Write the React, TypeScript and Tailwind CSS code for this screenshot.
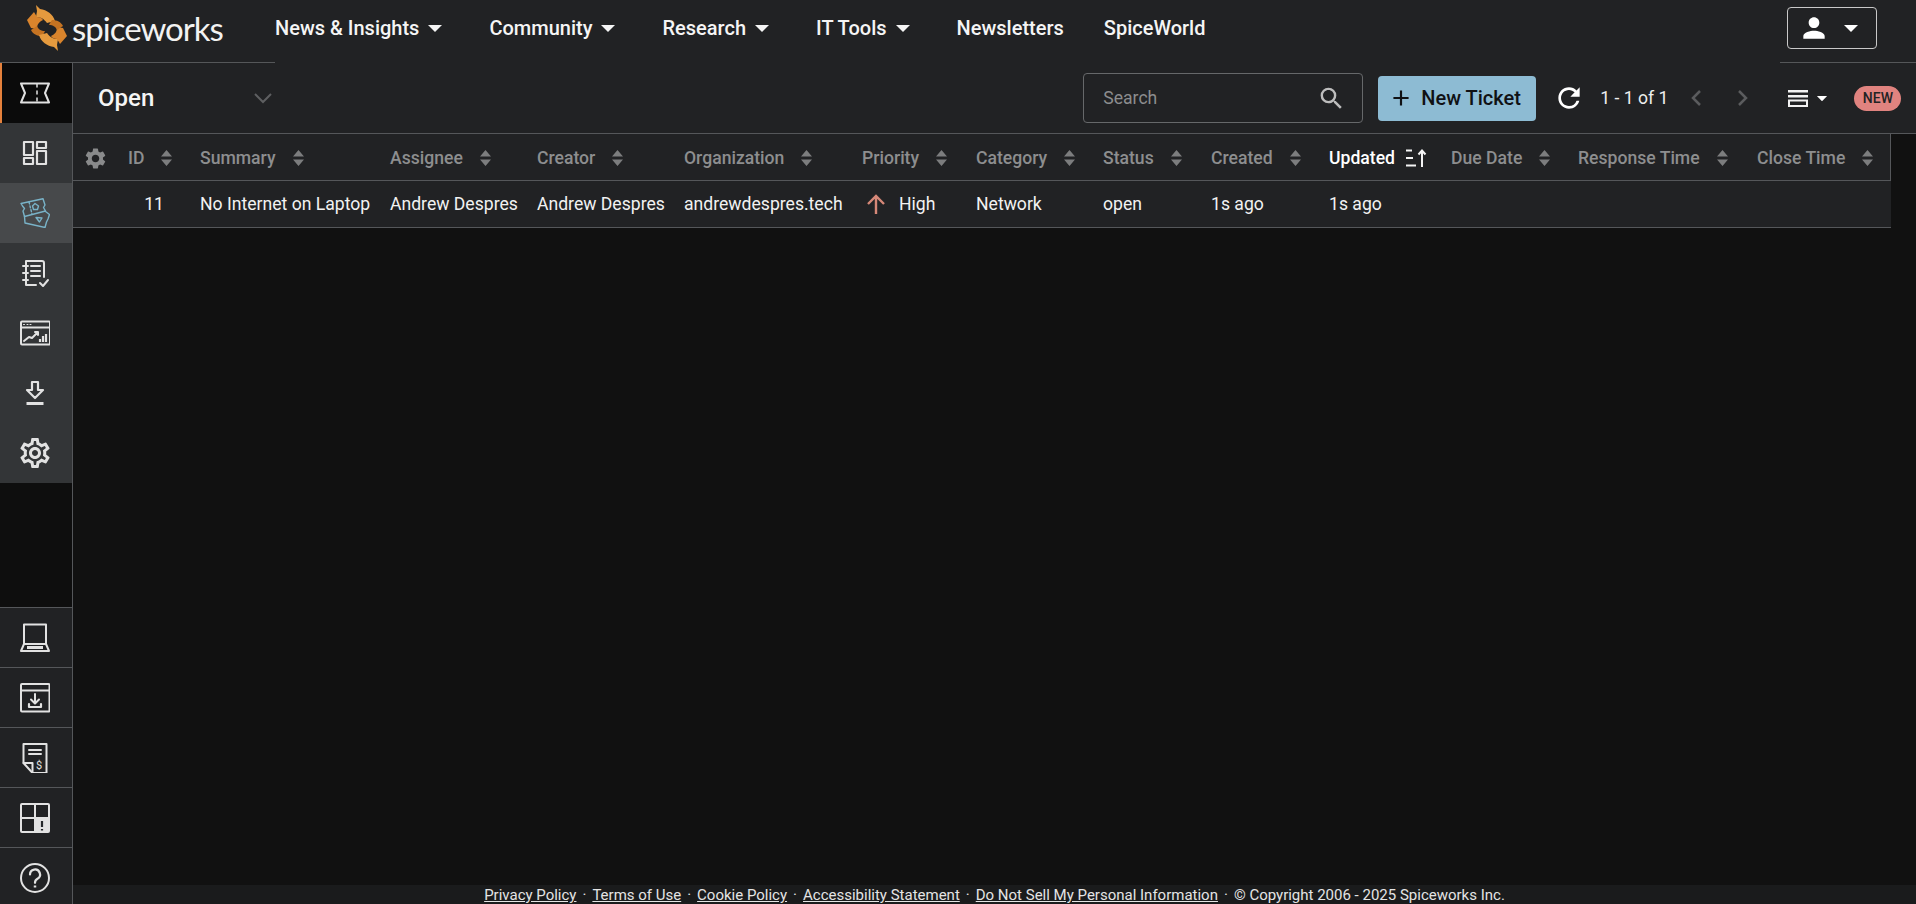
import React from 'react';
import { MdAdd, MdOutlineSettings, MdPerson, MdRefresh, MdSearch, MdSettings } from 'react-icons/md';

const headers = [
  { label: 'ID' },
  { label: 'Summary' },
  { label: 'Assignee' },
  { label: 'Creator' },
  { label: 'Organization' },
  { label: 'Priority' },
  { label: 'Category' },
  { label: 'Status' },
  { label: 'Created' },
  { label: 'Updated', active: true },
  { label: 'Due Date' },
  { label: 'Response Time' },
  { label: 'Close Time' },
];

const footerLinks = ['Privacy Policy', 'Terms of Use', 'Cookie Policy', 'Accessibility Statement', 'Do Not Sell My Personal Information'];

function Caret({ className = '' }: { className?: string }) {
  return (
    <svg width="14" height="7" viewBox="0 0 14 7" className={className}>
      <path d="M0 0h14L7 7z" fill="currentColor" />
    </svg>
  );
}

function SortArrows() {
  return (
    <svg width="11" height="16" viewBox="0 0 11 16" className="ml-[17px] shrink-0 text-[#7c7d7e]">
      <path d="M5.5 0 11 6.5H0zM0 9.5h11L5.5 16z" fill="currentColor" />
    </svg>
  );
}

function Fan() {
  return (
    <g>
      <path d="M9 0l4 4C20 5 26 9 28 16l-8 2c-3-4-6-6-11-6l1-6z" fill="#e59a3e" />
      <path d="M0 15l7-8 3 5c3 0 5 1 6 3-4 2-6 4-6 9l-6-1z" fill="#d9842c" />
      <path d="M4 25l6-4c1 3 4 5 8 5-1 2-2 4-3 5-5 0-9-2-11-6z" fill="#c57322" />
    </g>
  );
}

function SpiceLogo() {
  return (
    <svg width="40" height="46" viewBox="0 0 40 46" className="shrink-0">
      <Fan />
      <g transform="rotate(180 20 23)">
        <Fan />
      </g>
    </svg>
  );
}

const line = { fill: 'none', stroke: '#e2e2e2', strokeWidth: 2, strokeLinejoin: 'round' as const, strokeLinecap: 'round' as const };

function TicketIcon() {
  return (
    <svg width="30" height="30" viewBox="0 0 30 30" {...line}>
      <path d="M1 5.500h28l-4 9.500 4 9.500H1l4-9.500z" />
      <path d="M17 6v3M17 13v3M17 20v3" strokeWidth="1.500" />
    </svg>
  );
}

function DashboardIcon() {
  return (
    <svg width="30" height="30" viewBox="0 0 30 30" {...line} strokeWidth={2.200}>
      <rect x="4" y="4" width="9" height="13" />
      <rect x="17" y="4" width="9" height="6" />
      <rect x="4" y="20" width="9" height="6" />
      <rect x="17" y="13" width="9" height="13" />
    </svg>
  );
}

function TicketsIcon() {
  return (
    <svg width="30" height="30" viewBox="0 0 30 30" {...line} stroke="#79b3c8" strokeWidth={1.400}>
      <path d="M1 5.500 23 .7l2 6.300-1.500 2.500 2 3.500L4.500 18.500 3 13l1.500-2.500L2.500 8z" />
      <path d="M9 4l3 12" strokeDasharray="2 2" />
      <path d="M15 5.500l3.500 2.500-1 3.500h-4l-1-3.500z" />
      <path d="M4.500 18.500 5 25l20 4.500 1.500-5.500 1.500-3 1.500-4.500-4-3" />
      <path d="M16 19.500l6 .5-2.500 4z" />
    </svg>
  );
}

function NotebookIcon() {
  return (
    <svg width="30" height="30" viewBox="0 0 30 30" {...line}>
      <path d="M6 3h16a2 2 0 0 1 2 2v14M6 3v24h10" />
      <path d="M3 8h5M3 15h5M3 22h5M11 8h9M11 13h9M11 18h9" />
      <path d="M20 25l3 3 5-6" />
    </svg>
  );
}

function ChartIcon() {
  return (
    <svg width="30" height="30" viewBox="0 0 30 30" {...line}>
      <rect x="1" y="3.500" width="29" height="23" rx="1" />
      <path d="M1 9.500h29" />
      <path d="M3.500 6.500h1M7 6.500h1M10 6.500h1" strokeWidth="1" />
      <path d="M4 23l5-4 3 1 6-6M15 14h3v3" />
      <path d="M20 24v-3M23 24v-6M26 24v-8" strokeWidth="2.200" strokeLinecap="butt" />
    </svg>
  );
}

function DownloadIcon() {
  return (
    <svg width="30" height="30" viewBox="0 0 30 30" {...line} strokeWidth={2.200}>
      <path d="M12 4h6v8h5l-8 8-8-8h5z" />
      <path d="M6.500 25.500h17" strokeWidth="3" strokeLinecap="butt" />
    </svg>
  );
}

function LaptopIcon() {
  return (
    <svg width="30" height="30" viewBox="0 0 30 30" {...line}>
      <path d="M4 21V1.500h22V21" />
      <path d="M4 21 1 28h28l-3-7z" />
      <path d="M7 24.500h16" strokeWidth="3" strokeLinecap="butt" />
    </svg>
  );
}

function InboxIcon() {
  return (
    <svg width="30" height="30" viewBox="0 0 30 30" {...line}>
      <rect x="1" y="1" width="28.500" height="27.500" rx="1" />
      <path d="M1 7.500h28.500" />
      <path d="M15 11v9M11 16.500l4 4 4-4" />
      <path d="M9 21v3h12v-3" strokeWidth="2.200" />
    </svg>
  );
}

function InvoiceIcon() {
  return (
    <svg width="30" height="30" viewBox="0 0 30 30" {...line}>
      <path d="M3.500 1h23v29h-14L3.500 20z" />
      <path d="M3.500 20h9v10" />
      <path d="M9 7h12M9 11h12" strokeWidth="2" />
      <text x="16" y="26" fontSize="11" fontFamily="Roboto, sans-serif" stroke="none" fill="#e2e2e2">$</text>
    </svg>
  );
}

function QuadrantIcon() {
  return (
    <svg width="30" height="30" viewBox="0 0 30 30" {...line}>
      <rect x="15" y="15" width="14" height="14" fill="#e2e2e2" stroke="none" />
      <rect x="1" y="1" width="28" height="28" rx="1" />
      <path d="M15 1v28M1 15h28" />
      <path d="M22 18v6M22 26v1.500" stroke="#26282b" strokeWidth="2.200" strokeLinecap="butt" />
    </svg>
  );
}

function HelpIcon() {
  return (
    <svg width="30" height="30" viewBox="0 0 30 30" {...line}>
      <circle cx="15" cy="15" r="14" />
      <path d="M10 11.500a5 5 0 1 1 7.500 4.300c-1.800 1-2.500 2-2.500 4" strokeWidth="2.200" />
      <path d="M15 22.500v2" strokeWidth="2.500" strokeLinecap="butt" />
    </svg>
  );
}

function DensityIcon() {
  return (
    <svg width="20" height="17" viewBox="0 0 20 17" fill="none" stroke="#f2f2f2">
      <path d="M0 1.200h20M0 6.200h20" strokeWidth="2.400" />
      <rect x="1" y="10.500" width="18" height="5.500" strokeWidth="2" />
    </svg>
  );
}

function SortedIcon() {
  return (
    <svg width="22" height="18" viewBox="0 0 22 18" fill="none" stroke="#f4f4f4" className="ml-[10px] shrink-0">
      <path d="M1 1.500h6M1 9h7M1 16.500h10" strokeWidth="2" />
      <path d="M17 18V2M13.500 5.500 17 1.500l3.500 4" strokeWidth="2" />
    </svg>
  );
}

function Chevron({ dir }: { dir: 'left' | 'right' }) {
  return (
    <svg width="12" height="18" viewBox="0 0 12 18" fill="none" stroke="#5b5c5e" strokeWidth="2.500">
      <path d={dir === 'left' ? 'M10 2 3 9l7 7' : 'M2 2l7 7-7 7'} />
    </svg>
  );
}

function RailItem({ children, className = '' }: { children: React.ReactNode; className?: string }) {
  return <div className={`flex h-[60px] shrink-0 items-center justify-center pr-[2px] ${className}`}>{children}</div>;
}

function NavLink({ label, caret = false, className = '' }: { label: string; caret?: boolean; className?: string }) {
  return (
    <div className={`flex items-center ${className}`}>
      <span className="text-[20px] font-medium text-[#f5f5f5]">{label}</span>
      {caret && <Caret className="ml-[9px] text-[#f5f5f5]" />}
    </div>
  );
}

export default function App() {
  return (
    <div className="flex h-screen w-full flex-col overflow-hidden bg-[#212224] font-['Roboto',sans-serif]">
      {/* top nav */}
      <header className="flex h-[62px] shrink-0 items-center pb-[6px]">
        <div className="flex w-[275px] shrink-0 items-center pl-[27px]">
          <SpiceLogo />
          <span className="ml-[5px] font-['Lato',sans-serif] text-[33px] leading-none font-normal tracking-[-1px] text-[#f2f2f2]">spiceworks</span>
        </div>
        <NavLink label="News & Insights" caret />
        <NavLink label="Community" caret className="ml-[47px]" />
        <NavLink label="Research" caret className="ml-[47px]" />
        <NavLink label="IT Tools" caret className="ml-[47px]" />
        <NavLink label="Newsletters" className="ml-[47px]" />
        <NavLink label="SpiceWorld" className="ml-[40px]" />
        <div className="mr-[39px] ml-auto flex h-[42px] w-[90px] items-center rounded border border-[#c9c9c9] pl-[10px]">
          <MdPerson className="text-[32px] text-white" />
          <Caret className="ml-[14px] text-white" />
        </div>
      </header>
      <div className="flex h-px shrink-0">
        <div className="w-[275px] bg-[#555759]" />
        <div className="flex-1" />
        <div className="w-[136px] bg-[#555759]" />
      </div>

      <div className="flex min-h-0 flex-1">
        {/* left rail */}
        <aside className="flex w-[73px] shrink-0 flex-col overflow-hidden border-r border-[#55575a] bg-[#0e0e0e]">
          <RailItem className="border-l-[2px] border-[#e5813c] bg-[#0b0b0b]"><div className="-ml-[2px]"><TicketIcon /></div></RailItem>
          <RailItem className="bg-[#333537]"><DashboardIcon /></RailItem>
          <RailItem className="bg-[#47494b]"><TicketsIcon /></RailItem>
          <RailItem className="bg-[#333537]"><NotebookIcon /></RailItem>
          <RailItem className="bg-[#333537]"><ChartIcon /></RailItem>
          <RailItem className="bg-[#333537]"><DownloadIcon /></RailItem>
          <RailItem className="bg-[#333537]"><MdOutlineSettings className="text-[36px] text-[#e2e2e2]" /></RailItem>
          <div className="h-[124px] shrink-0" />
          <RailItem className="border-t border-[#55575a] bg-[#212224]"><LaptopIcon /></RailItem>
          <RailItem className="border-t border-[#55575a] bg-[#212224]"><InboxIcon /></RailItem>
          <RailItem className="border-t border-[#55575a] bg-[#212224]"><InvoiceIcon /></RailItem>
          <RailItem className="border-t border-[#55575a] bg-[#212224]"><QuadrantIcon /></RailItem>
          <RailItem className="border-t border-[#55575a] bg-[#212224]"><HelpIcon /></RailItem>
        </aside>

        <main className="flex min-w-0 flex-1 flex-col bg-[#111111]">
          {/* toolbar */}
          <div className="flex h-[71px] shrink-0 items-center border-b border-[#55575a] bg-[#212224] pl-[25px]">
            <span className="text-[24px] font-medium text-[#f5f5f5]">Open</span>
            <svg width="18" height="11" viewBox="0 0 18 11" fill="none" stroke="#5e5f61" strokeWidth="2" className="ml-[100px]">
              <path d="M1 1l8 8 8-8" />
            </svg>
            <div className="ml-[811px] flex h-[50px] w-[280px] items-center rounded border border-[#66686a] pr-[16px] pl-[19px]">
              <span className="text-[17.6px] text-[#8c8d8e]">Search</span>
              <MdSearch className="ml-auto text-[29px] text-[#bdbdbd]" />
            </div>
            <button className="ml-[15px] flex h-[45px] w-[158px] items-center rounded bg-[#8dbbd3] pl-[10px] text-[20px] font-medium text-[#101114]">
              <MdAdd className="text-[26px]" />
              <span className="ml-[7px]">New Ticket</span>
            </button>
            <MdRefresh className="ml-[17px] text-[32px] text-white" />
            <span className="ml-[15px] text-[17.6px] text-[#eeeeee]">1 - 1 of 1</span>
            <div className="ml-[22px] flex items-center gap-[35px]">
              <Chevron dir="left" />
              <Chevron dir="right" />
            </div>
            <div className="ml-[39px] flex items-center">
              <DensityIcon />
              <Caret className="ml-[7px] scale-75 text-white" />
            </div>
            <span className="ml-[25px] flex h-[25px] w-[47px] items-center justify-center rounded-full bg-[#e0837f] text-[14px] font-medium text-[#232324]">NEW</span>
          </div>

          {/* table */}
          <div className="w-[1818px] shrink-0 bg-[#212224]">
            <div className="grid h-[47px] grid-cols-[45px_72px_190px_147px_147px_178px_114px_127px_108px_118px_122px_127px_179px_144px] items-center border-r border-b border-[#55575a] pt-[2px]">
              <MdSettings className="ml-[10px] text-[25px] text-[#898a8b]" />
              {headers.map((h) => (
                <div key={h.label} className="flex items-center pl-[10px]">
                  <span className={`text-[17.6px] font-medium ${h.active ? 'text-white' : 'text-[#8d8e8f]'}`}>{h.label}</span>
                  {h.active ? <SortedIcon /> : <SortArrows />}
                </div>
              ))}
            </div>
            <div className="grid h-[47px] grid-cols-[45px_72px_190px_147px_147px_178px_114px_127px_108px_118px_122px_127px_179px_144px] items-center border-b border-[#55575a] text-[17.6px] text-[#f2f2f2]">
              <span />
              <span className="pr-[26px] text-right">11</span>
              <span className="pl-[10px]">No Internet on Laptop</span>
              <span className="pl-[10px]">Andrew Despres</span>
              <span className="pl-[10px]">Andrew Despres</span>
              <span className="pl-[10px]">andrewdespres.tech</span>
              <span className="flex items-center pl-[15px]">
                <svg width="18" height="20" viewBox="0 0 18 20" fill="none" stroke="#d68878" strokeWidth="2.400">
                  <path d="M9 20V2M1 10l8-8 8 8" />
                </svg>
                <span className="ml-[14px]">High</span>
              </span>
              <span className="pl-[10px]">Network</span>
              <span className="pl-[10px]">open</span>
              <span className="pl-[10px]">1s ago</span>
              <span className="pl-[10px]">1s ago</span>
              <span />
              <span />
              <span />
            </div>
          </div>

          {/* footer */}
          <footer className="mt-auto flex h-[19px] shrink-0 items-center justify-center bg-[#1a1b1c] pt-[2px] text-[15px] leading-none whitespace-pre text-[#e4e4e4]">
            {footerLinks.map((l) => (
              <React.Fragment key={l}>
                <span className="underline">{l}</span>
                <span className="mx-[6px]">·</span>
              </React.Fragment>
            ))}
            <span>© Copyright 2006 - 2025 Spiceworks Inc.</span>
          </footer>
        </main>
      </div>
    </div>
  );
}
